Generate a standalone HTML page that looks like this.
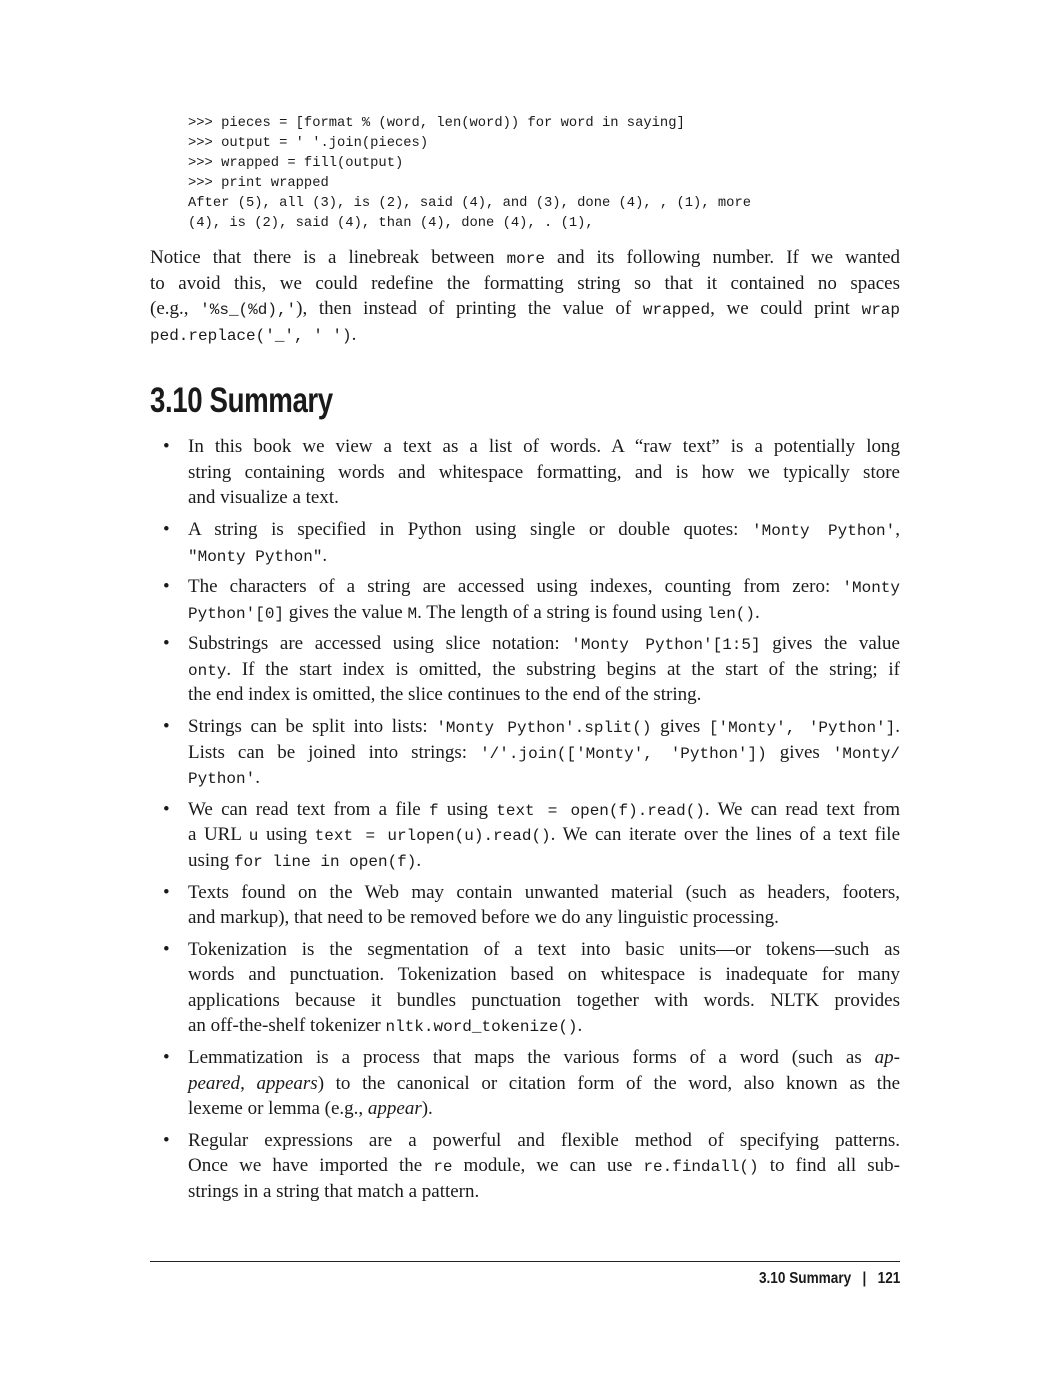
<!DOCTYPE html>
<html><head><meta charset="utf-8"><style>
body{margin:0;width:1050px;height:1378px;background:#fff;position:relative;overflow:hidden;color:#1a1a1a}
.c{position:absolute;left:188px;font-family:"Liberation Mono",monospace;font-size:13.8px;line-height:20px;white-space:pre}
.l{position:absolute;font-family:"Liberation Serif",serif;font-size:19px;line-height:26px;white-space:nowrap;text-align:justify;text-align-last:justify}
.e{text-align-last:left}
.p{left:150px;width:750px}
.b{left:188px;width:712px}
code{font-family:"Liberation Mono",monospace;font-size:16px}
.d{position:absolute;left:163px;font-family:"Liberation Serif",serif;font-size:19px;line-height:26px}
h2{position:absolute;left:150px;top:381px;margin:0;font-family:"Liberation Sans",sans-serif;font-size:35px;font-weight:bold;transform:scaleX(0.79);transform-origin:left;letter-spacing:-0.5px}
.f{position:absolute;right:150px;top:1270px;font-family:"Liberation Sans",sans-serif;font-weight:bold;font-size:16px;transform:scaleX(0.85);transform-origin:right}
</style></head><body>
<div class="c" style="top:114px">&gt;&gt;&gt; pieces = [format % (word, len(word)) for word in saying]
&gt;&gt;&gt; output = ' '.join(pieces)
&gt;&gt;&gt; wrapped = fill(output)
&gt;&gt;&gt; print wrapped
After (5), all (3), is (2), said (4), and (3), done (4), , (1), more
(4), is (2), said (4), than (4), done (4), . (1),</div>

<div class="l p" style="top:245px">Notice that there is a linebreak between <code>more</code> and its following number. If we wanted</div>
<div class="l p" style="top:271px">to avoid this, we could redefine the formatting string so that it contained no spaces</div>
<div class="l p" style="top:296px">(e.g., <code>'%s_(%d),'</code>), then instead of printing the value of <code>wrapped</code>, we could print <code>wrap</code></div>
<div class="l p e" style="top:322px"><code>ped.replace('_', ' ')</code>.</div>

<h2>3.10 Summary</h2>

<div class="d" style="top:434px">•</div>
<div class="l b" style="top:434px">In this book we view a text as a list of words. A “raw text” is a potentially long</div>
<div class="l b" style="top:460px">string containing words and whitespace formatting, and is how we typically store</div>
<div class="l b e" style="top:485px">and visualize a text.</div>

<div class="d" style="top:517px">•</div>
<div class="l b" style="top:517px">A string is specified in Python using single or double quotes: <code>'Monty Python'</code>,</div>
<div class="l b e" style="top:543px"><code>"Monty Python"</code>.</div>

<div class="d" style="top:574px">•</div>
<div class="l b" style="top:574px">The characters of a string are accessed using indexes, counting from zero: <code>'Monty</code></div>
<div class="l b e" style="top:600px"><code>Python'[0]</code> gives the value <code>M</code>. The length of a string is found using <code>len()</code>.</div>

<div class="d" style="top:631px">•</div>
<div class="l b" style="top:631px">Substrings are accessed using slice notation: <code>'Monty Python'[1:5]</code> gives the value</div>
<div class="l b" style="top:657px"><code>onty</code>. If the start index is omitted, the substring begins at the start of the string; if</div>
<div class="l b e" style="top:682px">the end index is omitted, the slice continues to the end of the string.</div>

<div class="d" style="top:714px">•</div>
<div class="l b" style="top:714px">Strings can be split into lists: <code>'Monty Python'.split()</code> gives <code>['Monty', 'Python']</code>.</div>
<div class="l b" style="top:740px">Lists can be joined into strings: <code>'/'.join(['Monty', 'Python'])</code> gives <code>'Monty/</code></div>
<div class="l b e" style="top:765px"><code>Python'</code>.</div>

<div class="d" style="top:797px">•</div>
<div class="l b" style="top:797px">We can read text from a file <code>f</code> using <code>text = open(f).read()</code>. We can read text from</div>
<div class="l b" style="top:822px">a URL <code>u</code> using <code>text = urlopen(u).read()</code>. We can iterate over the lines of a text file</div>
<div class="l b e" style="top:848px">using <code>for line in open(f)</code>.</div>

<div class="d" style="top:880px">•</div>
<div class="l b" style="top:880px">Texts found on the Web may contain unwanted material (such as headers, footers,</div>
<div class="l b e" style="top:905px">and markup), that need to be removed before we do any linguistic processing.</div>

<div class="d" style="top:937px">•</div>
<div class="l b" style="top:937px">Tokenization is the segmentation of a text into basic units—or tokens—such as</div>
<div class="l b" style="top:962px">words and punctuation. Tokenization based on whitespace is inadequate for many</div>
<div class="l b" style="top:988px">applications because it bundles punctuation together with words. NLTK provides</div>
<div class="l b e" style="top:1013px">an off-the-shelf tokenizer <code>nltk.word_tokenize()</code>.</div>

<div class="d" style="top:1045px">•</div>
<div class="l b" style="top:1045px">Lemmatization is a process that maps the various forms of a word (such as <i>ap-</i></div>
<div class="l b" style="top:1071px"><i>peared</i>, <i>appears</i>) to the canonical or citation form of the word, also known as the</div>
<div class="l b e" style="top:1096px">lexeme or lemma (e.g., <i>appear</i>).</div>

<div class="d" style="top:1128px">•</div>
<div class="l b" style="top:1128px">Regular expressions are a powerful and flexible method of specifying patterns.</div>
<div class="l b" style="top:1153px">Once we have imported the <code>re</code> module, we can use <code>re.findall()</code> to find all sub-</div>
<div class="l b e" style="top:1179px">strings in a string that match a pattern.</div>

<div style="position:absolute;left:150px;top:1261px;width:750px;height:1px;background:#222"></div>
<div class="f">3.10 Summary &nbsp;&nbsp;|&nbsp;&nbsp; 121</div>
</body></html>
